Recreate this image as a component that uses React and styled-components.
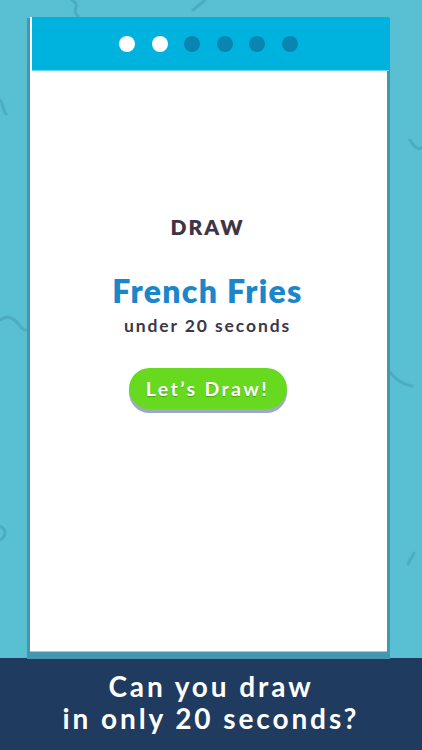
import React from "react";
import styled, { createGlobalStyle } from "styled-components";

const GlobalStyle = createGlobalStyle`
  html, body {
    margin: 0;
    padding: 0;
    background: #59bfd2;
  }
  body {
    font-family: "Lato", "Open Sans", sans-serif;
  }
`;

const Screen = styled.div`
  position: relative;
  width: 422px;
  height: 750px;
  overflow: hidden;
  display: flex;
  flex-direction: column;
  background: #59bfd2;
`;

const Doodles = styled.svg`
  position: absolute;
  left: 0;
  top: 0;
  width: 422px;
  height: 658px;
  pointer-events: none;
`;

const Stage = styled.div`
  position: relative;
  height: 658px;
  padding: 17px 35px 0 30px;
  box-sizing: border-box;
`;

const Card = styled.div`
  position: relative;
  height: 634px;
  background: #ffffff;
  display: flex;
  flex-direction: column;
  border-bottom: 1px solid #8fd3e3;
  box-shadow: 0 4px 0 3px #4597b0;
`;

const Header = styled.div`
  height: 53px;
  margin-right: -2px;
  margin-left: 2px;
  background: #00b3df;
  border-bottom: 1px solid #6ad6f0;
  display: flex;
  align-items: center;
  justify-content: center;
  gap: 16.6px;
  padding-right: 4px;
`;

const Dot = styled.span`
  width: 16px;
  height: 16px;
  border-radius: 50%;
  background: ${(p) => (p.$done ? "#ffffff" : "#0a85b2")};
`;

const Body = styled.div`
  flex: 1;
  display: flex;
  flex-direction: column;
  align-items: center;
  padding-top: 143px;
  padding-right: 2px;
`;

const Label = styled.div`
  font-size: 21px;
  line-height: 25px;
  font-weight: 800;
  letter-spacing: 2px;
  color: #3e3646;
`;

const Word = styled.div`
  margin-top: 34px;
  font-size: 32px;
  line-height: 36px;
  font-weight: 800;
  letter-spacing: 1.3px;
  color: #1b86c9;
`;

const Limit = styled.div`
  margin-top: 6px;
  font-size: 17.5px;
  line-height: 22px;
  font-weight: 700;
  letter-spacing: 1.9px;
  color: #3e3646;
`;

const GoButton = styled.button`
  margin-top: 31px;
  width: 158px;
  height: 41px;
  border: none;
  border-radius: 21px;
  background: #67da1f;
  box-shadow: 0 4px 0 #9eaac1;
  color: #ffffff;
  font-family: inherit;
  font-size: 19.5px;
  font-weight: 700;
  letter-spacing: 2.4px;
  text-shadow: 0 1px 1px rgba(40, 100, 0, 0.45);
  cursor: pointer;
`;

const Banner = styled.div`
  flex: 1;
  background: #1f3b60;
  display: flex;
  flex-direction: column;
  align-items: center;
  justify-content: center;
  padding-bottom: 4px;
`;

const Caption = styled.div`
  color: #ffffff;
  font-size: 28px;
  line-height: 32px;
  font-weight: 700;
  letter-spacing: 2.9px;
  text-align: center;
`;

const steps = [true, true, false, false, false, false];

export default function App() {
  return (
    <Screen>
      <GlobalStyle />
      <Stage>
        <Doodles viewBox="0 0 422 658">
          <g fill="none" stroke="#4cadc2" strokeWidth="3" strokeLinecap="round">
            <path d="M72 0 C82 6 70 10 78 16" />
            <path d="M205 0 L193 10" />
            <path d="M0 320 C8 314 14 318 20 326 C24 332 28 330 30 328" />
            <circle cx="-2" cy="533" r="7" />
            <path d="M388 370 C396 380 402 384 412 386" />
            <path d="M414 553 L408 564" />
            <path d="M410 140 C416 150 420 150 424 146" />
            <path d="M0 100 C4 104 2 110 6 114" />
          </g>
        </Doodles>
        <Card>
          <Header>
            {steps.map((done, i) => (
              <Dot key={i} $done={done} />
            ))}
          </Header>
          <Body>
            <Label>DRAW</Label>
            <Word>French Fries</Word>
            <Limit>under 20 seconds</Limit>
            <GoButton>Let’s Draw!</GoButton>
          </Body>
        </Card>
      </Stage>
      <Banner>
        <Caption>Can you draw</Caption>
        <Caption>in only 20 seconds?</Caption>
      </Banner>
    </Screen>
  );
}
